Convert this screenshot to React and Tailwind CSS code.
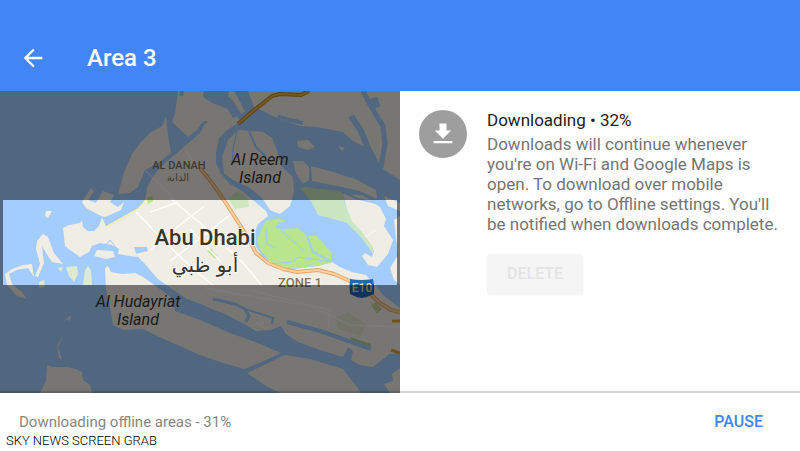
import { useState } from "react";

const land = [
  // main island
  "M63 228 L69 225 L80 223 L82 220 L83 227 L88 231 L94 231 L99 226 L102 217 L105 224 L106 227 L124 218 L138 209 L145 201 L147 188 L152 178 L158 170 L166 162 L178 152 L200 133 L204 125 L212 118 L222 112 L236 120 L238 123 L226 131 L219 138 L216 153 L216 163 L221 174 L230 184 L242 191 L254 201 L266 211 L268 216 L258 224 L255 232 L254 244 L262 256 L276 265 L292 269 L318 266 L332 262 L340 267 L352 272 L366 275 L374 284 L384 296 L400 308 L400 353 L389 354 L382 360 L373 367 L360 365 L351 360 L353 351 L348 347 L343 357 L320 350 L298 342 L286 334 L281 326 L270 330 L256 331 L248 326 L238 321 L225 314 L214 310 L201 304 L187 299 L172 289 L158 279 L144 263 L139 258 L135 254 L148 251 L147 247 L134 247 L137 257 L130 256 L118 254 L119 249 L112 245 L100 243 L92 246 L89 252 L80 257 L70 250 L65 246 Z",
  // Al Reem
  "M238 130 L263 132 L272 138 L277 150 L281 166 L293 177 L294 192 L290 206 L280 214 L270 210 L262 198 L250 188 L233 180 L224 173 L222 157 L228 140 Z",
  // northern coast
  "M178 91 L175 114 L172 122 L188 137 L197 130 L200 125 L205 121 L235 123 L240 120 L228 109 L212 103 L203 97 L204 91 Z",
  "M229 91 L228 97 L240 114 L245 112 L238 98 L234 91 Z",
  "M248 91 L254 107 L265 112 L277 118 L300 126 L317 127 L343 132 L353 141 L369 149 L380 167 L400 180 L400 91 Z",
  "M166 117 L162 126 L150 133 L140 143 L132 154 L124 172 L118 194 L130 193 L138 187 L145 170 L158 163 L171 153 L168 135 Z",
  "M293 161 L303 161 L309 167 L309 180 L303 184 L296 174 Z",
  "M311 166 L333 172 L355 179 L376 190 L377 199 L360 191 L342 187 L312 181 Z",
  "M297 141 L308 140 L315 147 L308 150 L298 147 Z",
  "M338 146 L345 148 L342 151 Z",
  // eastern shore
  "M343 194 L362 195 L380 207 L386 219 L384 226 L393 240 L388 254 L377 267 L368 265 L362 256 L365 253 L372 257 L374 251 L362 233 L350 221 Z",
  "M384 196 L400 203 L400 211 L388 206 Z",
  "M394 220 L400 216 L400 285 L394 280 L390 268 L398 255 Z",
  // Al Hudayriat
  "M105 268 L108 266 L111 272 L122 274 L135 273 L143 277 L160 289 L172 298 L175 311 L200 320 L230 333 L260 344 L281 353 L264 361 L244 369 L220 362 L200 355 L173 343 L155 335 L143 329 L123 330 L113 325 L110 307 L106 290 Z",
  "M285 355 L310 359 L343 369 L350 378 L357 387 L361 393 L280 393 L266 386 L247 373 L266 364 Z",
  "M400 368 L392 374 L393 381 L384 384 L390 393 L400 393 Z",
  // western islands
  "M47 365 L53 367 L67 367 L76 369 L82 372 L83 380 L90 385 L92 393 L40 393 L46 381 Z",
  "M82 202 L91 188 L94 191 L88 200 L96 203 L103 191 L114 195 L110 202 L118 207 L124 202 L121 210 L105 217 L101 216 L86 208 Z",
  "M46 211 L52 211 L48 218 L45 216 Z",
  "M43 234 L48 237 L54 253 L63 264 L52 262 L46 253 L42 246 L44 263 L38 277 L35 276 L40 264 L36 249 L37 241 Z",
  "M5 274 L7 285 L17 296 L27 299 L22 292 L12 284 L9 274 L17 270 L28 268 L34 277 L32 264 L23 265 L12 269 Z",
  "M97 250 L113 251 L115 257 L106 259 L94 256 Z",
  "M66 319 L71 315 L70 321 Z",
  "M64 335 L58 347 L62 360 L59 358 L57 346 Z",
];

const parks = [
  { d: "M300 188 L306 186 L342 191 L345 204 L352 221 L362 232 L373 247 L373 254 L361 237 L347 223 L333 219 L318 215 L312 203 Z", fill: "#cbe6c3" },
  { d: "M262 228 L266 221 L279 218 L286 221 L278 223 L275 228 L283 229 L298 228 L307 236 L316 235 L331 252 L331 263 L314 266 L288 269 L273 264 L260 250 L257 240 Z", fill: "#b9e58f" },
  { d: "M228 198 L238 191 L248 199 L249 207 L235 209 Z", fill: "#cfe8c0" },
  { d: "M207 251 L211 248 L217 256 L215 259 Z", fill: "#c5e8a4" },
  { d: "M147 198 L152 196 L153 201 L148 204 Z", fill: "#b9e58f" },
  { d: "M371 305 L376 302 L382 309 L377 314 Z", fill: "#c0d2a0" },
  { d: "M335 318 L348 312 L366 324 L361 336 L338 329 Z", fill: "#e2e6d3" },
  { d: "M350 337 L371 344 L371 348 L352 342 Z", fill: "#b9d292" },
  { d: "M66 267 L77 266 L78 274 L74 282 L69 276 Z", fill: "#dcebd0" },
  { d: "M83 285 L85 270 L88 266 L91 270 L92 285 Z", fill: "#dcebd0" },
  { d: "M39 282 L44 280 L45 287 L39 288 Z", fill: "#dcebd0" },
  { d: "M58 268 L63 267 L61 272 Z", fill: "#dcebd0" },
];

const streams = [
  { d: "M351 116 L361 131 L368 148 L378 168", w: 6 },
  { d: "M363 91 L372 108 L383 126 L385 144 L380 172", w: 5 },
  { d: "M373 98 L376 108", w: 9 },
  { d: "M216 92 L230 104 L237 116", w: 9 },
  { d: "M237 131 L233 148 L232 164", w: 1 },
  { d: "M249 131 L256 147 L266 157", w: 2 },
  { d: "M278 116 L286 119 L303 123", w: 4 },
  { d: "M303 186 L340 190 L355 198 L380 204", w: 2 },
  { d: "M182 91 L181 96", w: 4 },
  { d: "M213 299 L235 304 L245 309 L249 316 L246 322", w: 3 },
  { d: "M245 309 L273 318 L272 324", w: 2 },
  { d: "M287 322 L320 331 L371 349", w: 4 },
  { d: "M266 229 L267 244 L275 248", w: 1 },
  { d: "M280 228 L290 239 L299 246 L303 251", w: 1 },
  { d: "M307 236 L313 252 L330 261", w: 2 },
  { d: "M270 264 L292 262 L299 257 L331 262", w: 1 },
  { d: "M105 246 L110 240 L118 250", w: 1 },
];

const streets = [
  "M136 212 L166 243 L191 267 L214 286",
  "M170 198 L200 223 L244 264 L262 286",
  "M150 212 L176 203",
  "M170 261 L207 233 L231 214",
  "M190 229 L221 262",
  "M150 250 L186 220 L205 206",
  "M180 278 L200 264",
];

const faintStreets = [
  "M145 170 L180 205",
  "M185 150 L215 190",
  "M205 288 L260 298 L310 306 L350 325 L400 327",
  "M250 290 L330 310 L328 330",
  "M365 237 L376 230",
];

const dashes = ["M253 326 L258 323 L265 329 L269 327", "M254 329 L260 331", "M261 324 L264 322"];

const e10 =
  "M200 168 L212 183 L224 200 L238 222 L249 239 L256 253 L268 263 L283 269 L297 272 L318 270 L334 274 L350 281 L366 290 L380 303 L391 310 L400 312";
const e12 = "M238 124 L253 111 L272 96 L280 94 L301 95 L309 91";

function OfflineMap() {
  return (
    <svg
      viewBox="0 91 400 302"
      preserveAspectRatio="xMidYMid slice"
      className="block h-full w-full"
      role="img"
      aria-label="Map of Abu Dhabi"
    >
      <rect x="0" y="91" width="400" height="302" fill="#a3ccff" />
      {land.map((d) => (
        <path key={d} d={d} fill="#f0ede5" />
      ))}
      {parks.map((p) => (
        <path key={p.d} d={p.d} fill={p.fill} />
      ))}
      <g fill="none" stroke="#a3ccff" strokeLinejoin="round">
        {streams.map((s) => (
          <path key={s.d} d={s.d} strokeWidth={s.w} />
        ))}
      </g>
      <g fill="none" stroke="#fffefa" strokeWidth="1.4">
        {streets.map((d) => (
          <path key={d} d={d} />
        ))}
        {faintStreets.map((d) => (
          <path key={d} d={d} strokeOpacity="0.5" />
        ))}
        {dashes.map((d) => (
          <path key={d} d={d} strokeWidth="1" strokeDasharray="2 1" />
        ))}
      </g>
      <path d="M106 227 L138 209 L147 199" fill="none" stroke="#f8f0b0" strokeWidth="1.5" />

      {/* highways */}
      <g fill="none" strokeLinejoin="round">
        <path d={e10} stroke="#e5a66c" strokeWidth="4" />
        <path d={e10} stroke="#ffd19b" strokeWidth="2" />
        <path d={e12} stroke="#b98526" strokeWidth="4" />
        <path d={e12} stroke="#eeb14a" strokeWidth="2" />
        <path d="M392 321 L400 321 M391 350 L400 353" stroke="#e5a32f" strokeWidth="3" />
      </g>

      <g textAnchor="middle" className="font-[Roboto,sans-serif]">
        <g fontSize="16" fontStyle="italic" fill="#333333">
          <text x="260" y="165">Al Reem</text>
          <text x="260" y="183">Island</text>
          <text x="138" y="307">Al Hudayriat</text>
          <text x="138" y="325">Island</text>
        </g>
        <text x="179" y="169" fontSize="11" fontWeight="500" fill="#7d735f">AL DANAH</text>
        <text x="178" y="181" fontSize="10" fill="#7d735f" className="font-['DejaVu_Sans',sans-serif]">الدانة</text>
        <g stroke="#f7f4ee" strokeWidth="2" paintOrder="stroke">
          <text x="205" y="245" fontSize="22" fontWeight="500" fill="#39352d">Abu Dhabi</text>
          <text x="205" y="272" fontSize="20" fill="#39352d" className="font-['DejaVu_Sans',sans-serif]">أبو ظبي</text>
          <text x="300" y="287" fontSize="13" fontWeight="500" fill="#82765c">ZONE 1</text>
        </g>
        <path d="M350 279 Q361 281 373 279 Q375 286 374 294 Q368 297 362 298 Q355 297 350 294 Q349 286 350 279 Z" fill="#1f69b5" />
        <text x="362" y="292" fontSize="12" fontWeight="500" fill="#e8dc98">E10</text>
      </g>

      {/* everything outside of the saved area is dimmed */}
      <path d="M0 91 H400 V393 H0 Z M3 200 V285 H397 V200 Z" fillRule="evenodd" fill="#000000" fillOpacity="0.5" />
    </svg>
  );
}

function DownloadIcon() {
  return (
    <div className="flex size-12 shrink-0 items-center justify-center rounded-full bg-[#9e9e9e]">
      <svg viewBox="0 0 24 24" className="size-7" fill="#ffffff" aria-hidden="true">
        <path d="M19 9h-4V3H9v6H5l7 7 7-7zM4 18v2h16v-2H4z" />
      </svg>
    </div>
  );
}

export default function App() {
  const [paused, setPaused] = useState(false);

  return (
    <div className="relative flex min-h-screen flex-col bg-white font-[Roboto,sans-serif]">
      <header className="flex items-center gap-10 bg-[#4285f4] px-[19px] pt-10 pb-[15px] text-white">
        <button type="button" aria-label="Back" className="py-1">
          <svg viewBox="0 0 24 24" className="size-7" fill="currentColor" aria-hidden="true">
            <path d="M20 11H7.83l5.59-5.59L12 4l-8 8 8 8 1.41-1.41L7.83 13H20v-2z" />
          </svg>
        </button>
        <h1 className="text-2xl font-medium">Area 3</h1>
      </header>

      <main className="grid flex-1 grid-cols-2">
        <div>
          <OfflineMap />
        </div>
        <section className="flex items-start gap-5 px-[19px] pt-[19px]">
          <DownloadIcon />
          <div>
            <h2 className="text-[17px] leading-5 text-[#212121]">Downloading • 32%</h2>
            <p className="mt-1 text-[17px] leading-5 text-[#757575]">
              Downloads will continue whenever you're on Wi-Fi and Google Maps is open. To download over mobile
              networks, go to Offline settings. You'll be notified when downloads complete.
            </p>
            <button
              type="button"
              disabled
              className="mt-5 h-10 rounded-sm bg-[#f5f5f5] px-5 text-base font-medium text-[#e4e4e4] shadow-xs"
            >
              DELETE
            </button>
          </div>
        </section>
      </main>

      <footer className="z-10 flex h-[58px] items-center justify-between bg-white px-[19px] shadow-[0_-2px_1px_rgba(0,0,0,0.16)]">
        <p className="text-[15px] text-[#868686]">Downloading offline areas - 31%</p>
        <button type="button" onClick={() => setPaused(!paused)} className="px-[18px] text-base font-medium text-[#4285f4]">
          {paused ? "RESUME" : "PAUSE"}
        </button>
      </footer>
      <small className="absolute bottom-0 left-1.5 z-20 text-[13px] leading-5 font-light text-black">
        SKY NEWS SCREEN GRAB
      </small>
    </div>
  );
}
